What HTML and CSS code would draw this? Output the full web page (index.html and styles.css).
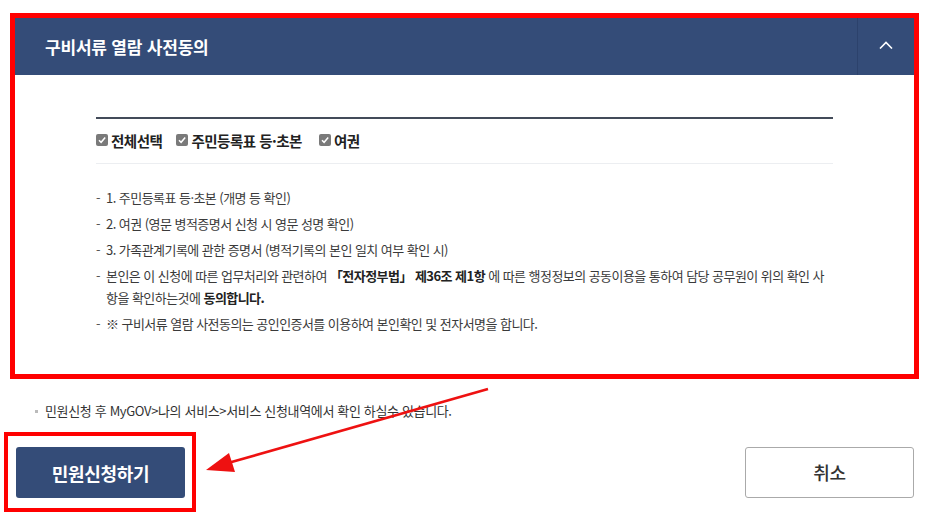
FILE: index.html
```html
<!DOCTYPE html>
<html lang="ko">
<head>
<meta charset="utf-8">
<link rel="stylesheet" href="styles.css">
</head>
<body>
<div class="page">
  <section class="panel">
    <header class="panel-head">
      <h2 class="panel-title">구비서류 열람 사전동의</h2>
      <button class="toggle" aria-label="접기">
        <svg width="14" height="8" viewBox="0 0 14 8"><path d="M1 7.5 L7 1.5 L13 7.5" fill="none" stroke="#fff" stroke-width="1.6"/></svg>
      </button>
    </header>
    <div class="panel-body">
      <div class="checks">
        <label class="check"><span class="box"><svg width="12" height="12" viewBox="0 0 12 12"><path d="M3 6.2 L5.1 8.3 L9.2 3.6" fill="none" stroke="#fff" stroke-width="1.5"/></svg></span>전체선택</label>
        <label class="check"><span class="box"><svg width="12" height="12" viewBox="0 0 12 12"><path d="M3 6.2 L5.1 8.3 L9.2 3.6" fill="none" stroke="#fff" stroke-width="1.5"/></svg></span>주민등록표 등·초본</label>
        <label class="check"><span class="box"><svg width="12" height="12" viewBox="0 0 12 12"><path d="M3 6.2 L5.1 8.3 L9.2 3.6" fill="none" stroke="#fff" stroke-width="1.5"/></svg></span>여권</label>
      </div>
      <ul class="items">
        <li>1. 주민등록표 등·초본 (개명 등 확인)</li>
        <li>2. 여권 (영문 병적증명서 신청 시 영문 성명 확인)</li>
        <li>3. 가족관계기록에 관한 증명서 (병적기록의 본인 일치 여부 확인 시)</li>
        <li>본인은 이 신청에 따른 업무처리와 관련하여 <b>「전자정부법」 제36조 제1항</b> 에 따른 행정정보의 공동이용을 통하여 담당 공무원이 위의 확인 사항을 확인하는것에 <b>동의합니다.</b></li>
        <li>※ 구비서류 열람 사전동의는 공인인증서를 이용하여 본인확인 및 전자서명을 합니다.</li>
      </ul>
    </div>
  </section>
  <p class="note">민원신청 후 MyGOV&gt;나의 서비스&gt;서비스 신청내역에서 확인 하실수 있습니다.</p>
  <div class="actions">
    <div class="highlight"><button class="btn btn-primary">민원신청하기</button></div>
    <button class="btn btn-outline">취소</button>
  </div>
  <svg class="arrow" width="929" height="517" viewBox="0 0 929 517">
    <line x1="488" y1="389" x2="228" y2="463" stroke="#ee1111" stroke-width="2.6"/>
    <polygon points="206,470 229,453 235,472" fill="#ee1111"/>
  </svg>
</div>
</body>
</html>
```
FILE: styles.css
```css
* { box-sizing: border-box; }
html, body { margin: 0; padding: 0; background: #fff; }
body {
  font-family: "Noto Sans CJK KR", "Noto Sans", sans-serif;
  color: #333;
  width: 929px;
  height: 517px;
  overflow: hidden;
}
.page {
  position: relative;
  padding: 13px 10px 0 10px;
}
.panel {
  border: 5px solid #f00;
  height: 366px;
  display: flex;
  flex-direction: column;
}
.panel-head {
  height: 57px;
  background: #344c78;
  display: flex;
  align-items: center;
  justify-content: space-between;
  padding-left: 30px;
}
.panel-title {
  margin: 0;
  font-size: 17px;
  font-weight: 700;
  color: #fff;
  letter-spacing: -0.2px;
}
.toggle {
  width: 57px;
  height: 57px;
  border: 0;
  border-left: 1px solid #2c426c;
  background: transparent;
  display: flex;
  align-items: center;
  justify-content: center;
  padding: 0;
  margin-top: 0;
}
.toggle svg { margin-top: -4px; }
.panel-body {
  flex: 1;
  padding: 42px 81px 0 81px;
}
.checks {
  border-top: 2px solid #434b59;
  border-bottom: 1px solid #eceef1;
  height: 47px;
  display: flex;
  align-items: center;
  gap: 14px;
  padding-bottom: 2px;
}
.check {
  display: flex;
  align-items: center;
  font-size: 14.5px;
  font-weight: 700;
  color: #222;
  letter-spacing: -0.5px;
}
.check + .check + .check { margin-left: 3px; }
.box {
  width: 12px;
  height: 12px;
  background: #7a7a7a;
  border-radius: 2px;
  margin-right: 3px;
  display: inline-flex;
}
.items {
  list-style: none;
  margin: 23px 0 0;
  padding: 0;
}
.items li {
  position: relative;
  padding-left: 10px;
  font-size: 13px;
  line-height: 22px;
  margin-bottom: 4px;
  color: #3a3a3a;
  letter-spacing: -0.55px;
}
.items li::before {
  content: "-";
  position: absolute;
  left: 0;
  top: 0;
  color: #555;
}
.items b { font-weight: 700; color: #222; }
.note {
  margin: 22px 0 0 25px;
  font-size: 13px;
  color: #333;
  letter-spacing: -0.35px;
  line-height: 20px;
  display: flex;
  align-items: center;
}
.note::before {
  content: "";
  width: 3px;
  height: 3px;
  background: #bbb;
  margin-right: 7px;
}
.actions {
  display: flex;
  justify-content: space-between;
  align-items: center;
  margin: 11px 5px 0 -6px;
}
.highlight {
  border: 4px solid #f00;
  padding: 11px 7px 10px 8px;
}
.btn {
  width: 169px;
  height: 51px;
  border-radius: 3px;
  font-family: inherit;
  font-size: 18px;
  letter-spacing: -0.3px;
  cursor: pointer;
}
.btn-primary {
  display: block;
  background: #344c78;
  border: 0;
  color: #fff;
  font-weight: 700;
}
.btn-outline {
  background: #fff;
  border: 1px solid #aaa;
  color: #333;
  font-weight: 500;
}
.arrow {
  position: absolute;
  left: 0;
  top: 0;
  pointer-events: none;
}
```
